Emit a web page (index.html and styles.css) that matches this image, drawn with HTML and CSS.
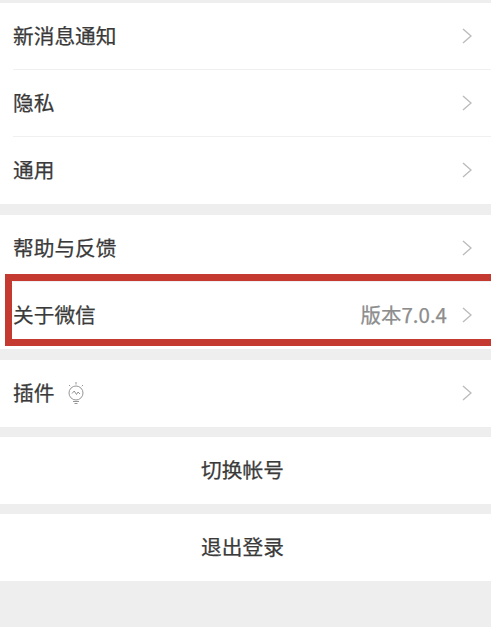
FILE: index.html
```html
<!DOCTYPE html>
<html lang="zh-CN">
  <head>
    <meta charset="UTF-8" />
    <meta name="viewport" content="width=device-width, initial-scale=1.0" />
    <title>设置</title>
    <link rel="stylesheet" href="styles.css">
  </head>
  <body>
    <div class="group group-first">
      <div class="row">
        <span class="label">新消息通知</span>
        <svg class="chevron" viewBox="0 0 10 16"><path d="M1 1l8 7-8 7" /></svg>
      </div>
      <div class="row">
        <span class="label">隐私</span>
        <svg class="chevron" viewBox="0 0 10 16"><path d="M1 1l8 7-8 7" /></svg>
      </div>
      <div class="row">
        <span class="label">通用</span>
        <svg class="chevron" viewBox="0 0 10 16"><path d="M1 1l8 7-8 7" /></svg>
      </div>
    </div>

    <div class="group group-help">
      <div class="row">
        <span class="label">帮助与反馈</span>
        <svg class="chevron" viewBox="0 0 10 16"><path d="M1 1l8 7-8 7" /></svg>
      </div>
      <div class="row row-about">
        <span class="label">关于微信</span>
        <span class="version">版本7.0.4</span>
        <svg class="chevron" viewBox="0 0 10 16"><path d="M1 1l8 7-8 7" /></svg>
        <div class="highlight"></div>
      </div>
    </div>

    <div class="group">
      <div class="row">
        <span class="label">插件</span>
        <svg class="bulb" viewBox="0 0 18 22">
          <path d="M9 0v2.5M2 3l1.2 1.2M16 3l-1.2 1.2" />
          <circle cx="9" cy="11" r="7" />
          <path d="M5 11.5l2.2-2.5 2.3 3.5 1.5-2.5 2 2" />
          <path d="M6 19.5h6M7.5 21.5h3" />
        </svg>
        <svg class="chevron" viewBox="0 0 10 16"><path d="M1 1l8 7-8 7" /></svg>
      </div>
    </div>

    <div class="group">
      <div class="row row-center"><span class="label">切换帐号</span></div>
    </div>

    <div class="group">
      <div class="row row-center"><span class="label">退出登录</span></div>
    </div>
  </body>
</html>
```

FILE: styles.css
```css
body {
  margin: 0;
  padding-top: 3px;
  min-height: 624px;
  background-color: #eeeeee;
  font-family: "Noto Sans CJK SC", "Liberation Sans", sans-serif;
  color: #3a3a3a;
  overflow: hidden;
}

.group {
  background-color: #fff;
  margin-bottom: 10px;
}

.group-first {
  margin-bottom: 11px;
}

.group-help {
  margin-bottom: 11px;
}

.row {
  position: relative;
  display: flex;
  align-items: center;
  height: 63px;
  padding: 0 19px 4px 13px;
}

/* hairline between rows, starts at the text edge */
.row + .row::before {
  content: "";
  position: absolute;
  top: -1px;
  left: 13px;
  right: 0;
  height: 1px;
  background-color: #f0f0f0;
}

.row-center {
  justify-content: center;
}

.label {
  font-size: 20.7px;
  line-height: 28px;
  -webkit-text-stroke: 0.25px #3a3a3a;
}

.version {
  margin-left: auto;
  font-size: 20.5px;
  line-height: 28px;
  color: #8d8d8d;
  -webkit-text-stroke: 0.25px #8d8d8d;
}

.chevron {
  width: 10px;
  height: 16px;
  margin-top: 2px;
  margin-left: auto;
  fill: none;
  stroke: #bcbcbc;
  stroke-width: 1.4;
}

.version + .chevron {
  margin-left: 15px;
}

.bulb {
  width: 18px;
  height: 22px;
  margin-top: 2px;
  margin-left: 13px;
  fill: none;
  stroke: #8a8a8a;
  stroke-width: 0.9;
}

/* red annotation box drawn over the row, open at the right edge */
.highlight {
  position: absolute;
  top: -8px;
  left: 5px;
  right: 0;
  height: 58px;
  border: 7.5px solid #c43a30;
  border-right: none;
}
```
